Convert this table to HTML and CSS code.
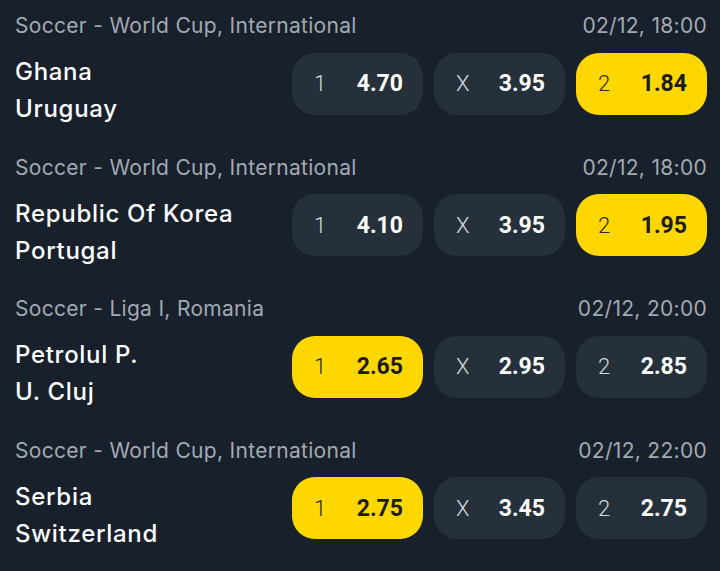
FILE: index.html
```html
<!DOCTYPE html>
<html lang="en">
<head>
    <meta charset="UTF-8">
    <meta name="viewport" content="width=device-width, initial-scale=1.0">
    <title>Matches</title>
    <link rel="stylesheet" href="styles.css">
</head>
<body>
    <div class="list">
        <div class="match">
            <div class="match-head">
                <span>Soccer - World Cup, International</span>
                <span>02/12, 18:00</span>
            </div>
            <div class="match-body">
                <div class="teams">
                    <div>Ghana</div>
                    <div>Uruguay</div>
                </div>
                <div class="odds">
                    <div class="odd"><span class="label">1</span><span class="value">4.70</span></div>
                    <div class="odd"><span class="label">X</span><span class="value">3.95</span></div>
                    <div class="odd selected"><span class="label">2</span><span class="value">1.84</span></div>
                </div>
            </div>
        </div>

        <div class="match">
            <div class="match-head">
                <span>Soccer - World Cup, International</span>
                <span>02/12, 18:00</span>
            </div>
            <div class="match-body">
                <div class="teams">
                    <div>Republic Of Korea</div>
                    <div>Portugal</div>
                </div>
                <div class="odds">
                    <div class="odd"><span class="label">1</span><span class="value">4.10</span></div>
                    <div class="odd"><span class="label">X</span><span class="value">3.95</span></div>
                    <div class="odd selected"><span class="label">2</span><span class="value">1.95</span></div>
                </div>
            </div>
        </div>

        <div class="match">
            <div class="match-head">
                <span>Soccer - Liga I, Romania</span>
                <span>02/12, 20:00</span>
            </div>
            <div class="match-body">
                <div class="teams">
                    <div>Petrolul P.</div>
                    <div>U. Cluj</div>
                </div>
                <div class="odds">
                    <div class="odd selected"><span class="label">1</span><span class="value">2.65</span></div>
                    <div class="odd"><span class="label">X</span><span class="value">2.95</span></div>
                    <div class="odd"><span class="label">2</span><span class="value">2.85</span></div>
                </div>
            </div>
        </div>

        <div class="match">
            <div class="match-head">
                <span>Soccer - World Cup, International</span>
                <span>02/12, 22:00</span>
            </div>
            <div class="match-body">
                <div class="teams">
                    <div>Serbia</div>
                    <div>Switzerland</div>
                </div>
                <div class="odds">
                    <div class="odd selected"><span class="label">1</span><span class="value">2.75</span></div>
                    <div class="odd"><span class="label">X</span><span class="value">3.45</span></div>
                    <div class="odd"><span class="label">2</span><span class="value">2.75</span></div>
                </div>
            </div>
        </div>
    </div>
</body>
</html>
```

FILE: styles.css
```css
body {
    margin: 0;
    padding: 0;
    background: #18202b;
    font-family: Inter, Roboto, "Liberation Sans", sans-serif;
    color: #ffffff;
}
.match {
    padding: 12px 13px 14.5px 15px;
}
.match-head {
    display: flex;
    justify-content: space-between;
    height: 28px;
    font-size: 21px;
    line-height: 28px;
    letter-spacing: 0.3px;
    color: #a3a9b2;
}
.match-body {
    display: flex;
    justify-content: space-between;
    align-items: flex-start;
    margin-top: 13px;
}
.teams {
    font-size: 24px;
    line-height: 37px;
    font-weight: 500;
    letter-spacing: 0.7px;
}
.odds {
    display: flex;
    gap: 11px;
    margin-top: -0.5px;
}
.odd {
    display: flex;
    justify-content: space-between;
    align-items: center;
    width: 131px;
    height: 62px;
    box-sizing: border-box;
    padding: 0 20px 0 22px;
    border-radius: 23px;
    background: #25303b;
    font-family: Roboto, "Liberation Sans", sans-serif;
}
.odd .label {
    font-size: 22px;
    font-weight: 300;
    color: #d6d9dd;
}
.odd .value {
    font-size: 23px;
    font-weight: 700;
    color: #ffffff;
}
.odd.selected {
    background: #fed700;
}
.odd.selected .label {
    color: #2a2a22;
}
.odd.selected .value {
    color: #1c1c16;
}
```
